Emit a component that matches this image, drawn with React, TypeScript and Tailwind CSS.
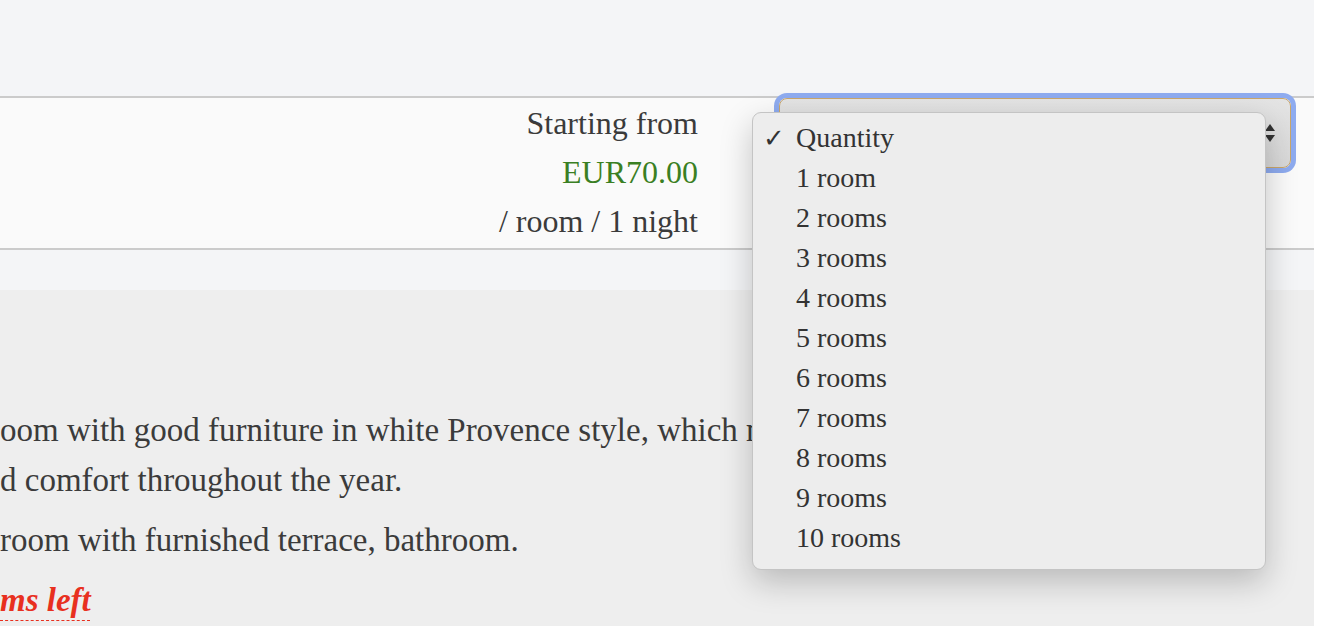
const serif = { fontFamily: '"Liberation Serif", "Times New Roman", serif' };

const options = [
  "Quantity",
  "1 room",
  "2 rooms",
  "3 rooms",
  "4 rooms",
  "5 rooms",
  "6 rooms",
  "7 rooms",
  "8 rooms",
  "9 rooms",
  "10 rooms",
];

function SelectArrows() {
  return (
    <svg width="12" height="20" viewBox="0 0 12 20" className="text-[#333]">
      <path d="M6 1 L11 8 L1 8 Z" fill="currentColor" />
      <path d="M6 19 L11 12 L1 12 Z" fill="currentColor" />
    </svg>
  );
}

function QuantityMenu() {
  return (
    <div className="absolute left-[752px] top-[112px] z-20 w-[514px] rounded-[9px] border border-[#c4c4c4] bg-[#ededed] pt-[5px] pb-[11px] shadow-[0_12px_32px_rgba(0,0,0,0.22)]">
      {options.map((o, i) => (
        <div key={o} className="flex h-10 items-center text-[28px] text-[#333]">
          <span className="w-[43px] pl-[10px] text-[26px] font-bold leading-none" style={{ fontFamily: '"DejaVu Sans", sans-serif' }}>
            {i === 0 ? "✓" : ""}
          </span>
          <span>{o}</span>
        </div>
      ))}
    </div>
  );
}

export default function App() {
  return (
    <div className="relative flex h-[626px] overflow-hidden bg-white text-[#3b3b3b]" style={serif}>
      <div className="w-[1314px] shrink-0">
        <div className="h-[96px] bg-[#f4f5f7]" />

        <div className="flex h-[154px] border-y-2 border-[#cbcbcb] bg-[#fafafa]">
          <div className="flex-1" />
          <div className="pt-[1px] text-right text-[32px] leading-[49px]">
            <div>Starting from</div>
            <div className="text-[#3a7f23]">EUR70.00</div>
            <div>/ room / 1 night</div>
          </div>
          <div className="ml-[81px] mr-[23px] w-[512px]">
            <div className="flex h-[70px] items-center justify-end rounded-[8px] border border-[#c9a66b] bg-gradient-to-b from-[#e4e4e4] to-[#d8d8d8] pr-[14px] shadow-[0_0_0_5px_#8eabef]">
              <SelectArrows />
            </div>
          </div>
        </div>

        <div className="h-[40px] bg-[#f4f5f7]" />

        <div className="h-[336px] bg-[#eeeeee] pt-[115px] text-[33px] whitespace-nowrap">
          <p className="leading-[50px]">
            oom with good furniture in white Provence style, which makes your stay pleasant
            <br />
            d comfort throughout the year.
          </p>
          <p className="mt-[10px] leading-[50px]">room with furnished terrace, bathroom.</p>
          <p className="leading-[70px]">
            <span className="font-bold italic text-[#e8301f] underline decoration-[#e8301f] decoration-dashed decoration-1 underline-offset-[9px]">
              ms left
            </span>
          </p>
        </div>
      </div>
      <div className="flex-1 bg-white" />
      <QuantityMenu />
    </div>
  );
}
